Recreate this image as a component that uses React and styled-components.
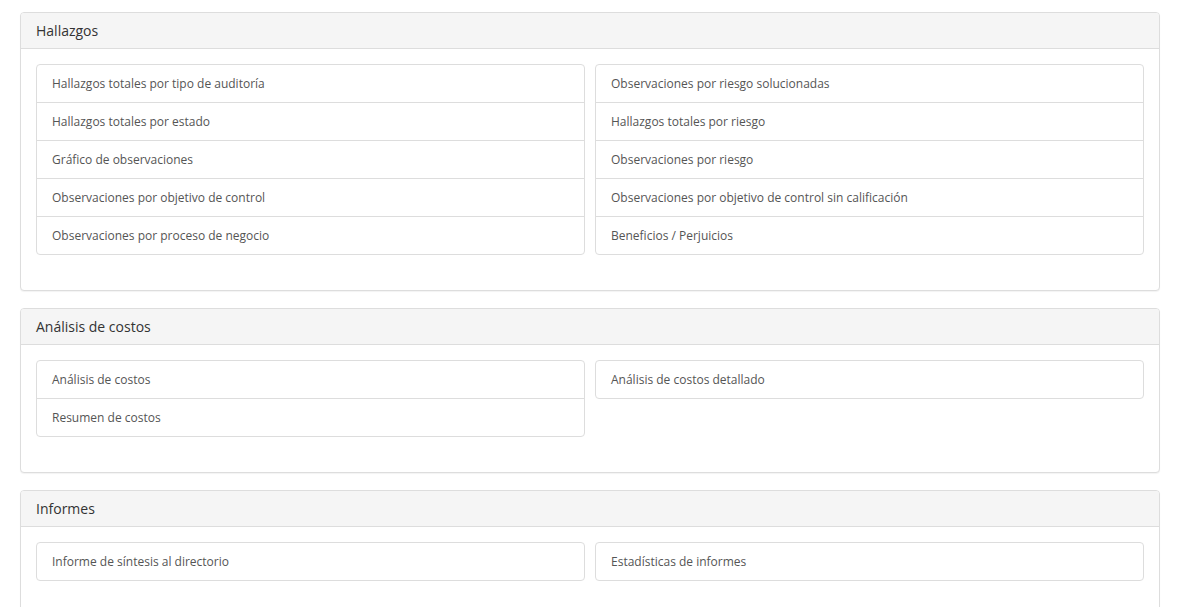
import React from 'react';
import styled, {createGlobalStyle} from "styled-components";

const GlobalStyle = createGlobalStyle`
  html, body {
    margin: 0;
    padding: 0;
    background: #fff;
  }
  body {
    font-family: "Open Sans", "Liberation Sans", Arial, sans-serif;
    color: #333;
  }
`;

const Page = styled.div`
  padding: 12px 0 0 20px;
`;
const Panel = styled.section`
  width: 1140px;
  box-sizing: border-box;
  border: 1px solid #ddd;
  border-radius: 4px;
  margin-bottom: 17px;
  background: #fff;
  box-shadow: 0 1px 1px rgba(0, 0, 0, 0.05);
`;
const PanelHeading = styled.div`
  background: #f5f5f5;
  border-bottom: 1px solid #ddd;
  border-radius: 3px 3px 0 0;
  padding: 9px 15px;
  font-size: 14px;
  line-height: 17px;
  color: #333;
`;
const PanelBody = styled.div`
  padding: 15px 15px 35px;
  display: grid;
  grid-template-columns: 1fr 1fr;
  column-gap: 10px;
  align-items: start;
`;
const ListGroup = styled.ul`
  list-style: none;
  margin: 0;
  padding: 0;
  border: 1px solid #ddd;
  border-radius: 4px;
`;
const ListItem = styled.li`
  padding: 10px 15px;
  font-size: 12px;
  line-height: 17px;
  color: #555;
  cursor: pointer;

  & + & {
    border-top: 1px solid #ddd;
  }
`;

const sections = [
    {
        title: 'Hallazgos',
        columns: [
            [
                'Hallazgos totales por tipo de auditoría',
                'Hallazgos totales por estado',
                'Gráfico de observaciones',
                'Observaciones por objetivo de control',
                'Observaciones por proceso de negocio'
            ],
            [
                'Observaciones por riesgo solucionadas',
                'Hallazgos totales por riesgo',
                'Observaciones por riesgo',
                'Observaciones por objetivo de control sin calificación',
                'Beneficios / Perjuicios'
            ]
        ]
    },
    {
        title: 'Análisis de costos',
        columns: [
            ['Análisis de costos', 'Resumen de costos'],
            ['Análisis de costos detallado']
        ]
    },
    {
        title: 'Informes',
        columns: [
            ['Informe de síntesis al directorio'],
            ['Estadísticas de informes']
        ]
    }
];

const App = () => {
    return (
        <Page>
            <GlobalStyle/>
            {sections.map(section => (
                <Panel key={section.title}>
                    <PanelHeading>{section.title}</PanelHeading>
                    <PanelBody>
                        {section.columns.map((column, i) => (
                            <ListGroup key={i}>
                                {column.map(item => <ListItem key={item}>{item}</ListItem>)}
                            </ListGroup>
                        ))}
                    </PanelBody>
                </Panel>
            ))}
        </Page>
    );
};

export default App;
